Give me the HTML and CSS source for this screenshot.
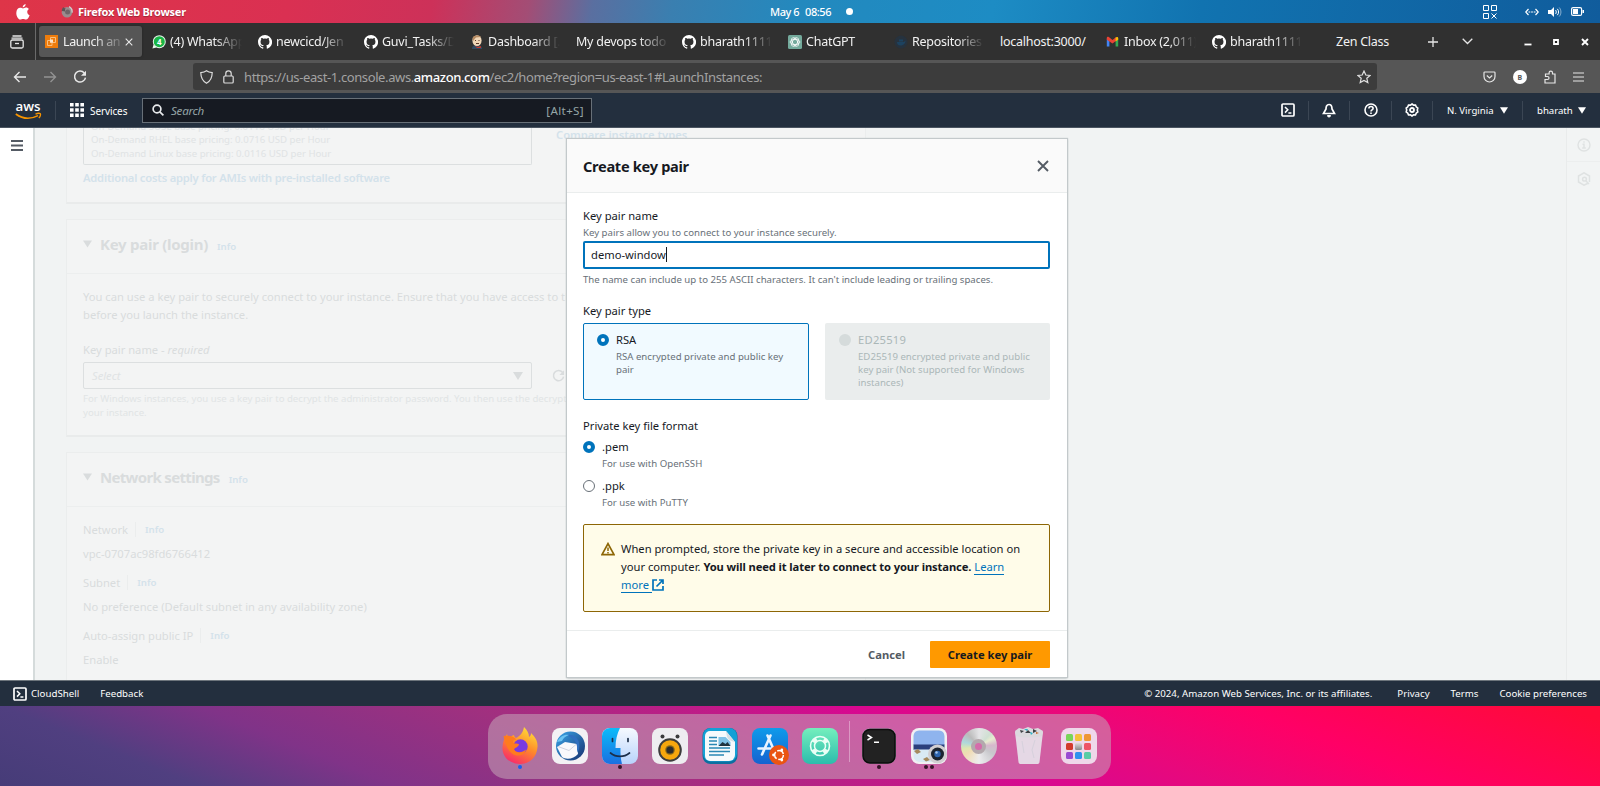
FILE: index.html
```html
<!DOCTYPE html>
<html lang="en">
<head>
<meta charset="utf-8">
<title>Launch an instance</title>
<link rel="stylesheet" href="styles.css">
</head>
<body>
<svg class="defs" width="0" height="0">
  <defs>
    <symbol id="github" viewBox="0 0 16 16"><path d="M8 0C3.58 0 0 3.58 0 8c0 3.54 2.29 6.53 5.47 7.59.4.07.55-.17.55-.38v-1.33c-2.23.48-2.7-1.07-2.7-1.07-.36-.93-.89-1.17-.89-1.17-.73-.5.05-.49.05-.49.8.06 1.23.83 1.23.83.72 1.22 1.87.87 2.33.66.07-.52.28-.87.5-1.07-1.77-.2-3.64-.89-3.64-3.95 0-.87.31-1.59.82-2.15-.08-.2-.36-1.02.08-2.12 0 0 .67-.21 2.2.82a7.7 7.7 0 0 1 4 0c1.53-1.04 2.2-.82 2.2-.82.44 1.1.16 1.92.08 2.12.51.56.82 1.27.82 2.15 0 3.07-1.87 3.75-3.65 3.95.29.25.54.73.54 1.48v2.19c0 .21.15.46.55.38A8 8 0 0 0 8 0z" fill="#fff"/></symbol>
    <symbol id="shell" viewBox="0 0 14 14"><rect x="1" y="1" width="12" height="12" rx="1" fill="none" stroke="#fff" stroke-width="1.7"/><path d="M4 4l2.8 2.8L4 9.6M7.4 10h3" fill="none" stroke="#fff" stroke-width="1.5"/></symbol>
    <symbol id="down" viewBox="0 0 10 8"><path d="M0 0h10L5 8z" fill="currentColor"/></symbol>
    <linearGradient id="g-blue" x1="0" y1="0" x2="0" y2="1"><stop offset="0" stop-color="#0bbcfa"/><stop offset="1" stop-color="#1b6fe0"/></linearGradient>
    <linearGradient id="g-pale" x1="0" y1="0" x2="0" y2="1"><stop offset="0" stop-color="#f6faff"/><stop offset="1" stop-color="#b8d3fb"/></linearGradient>
    <linearGradient id="g-store" x1="0" y1="0" x2="0" y2="1"><stop offset="0" stop-color="#0e9bea"/><stop offset="1" stop-color="#1562d0"/></linearGradient>
    <linearGradient id="g-mint" x1="0" y1="0" x2="0" y2="1"><stop offset="0" stop-color="#74efbd"/><stop offset="1" stop-color="#2cbcac"/></linearGradient>
    <linearGradient id="g-fox" x1=".8" y1="0" x2=".3" y2="1"><stop offset="0" stop-color="#ffe43a"/><stop offset=".5" stop-color="#ff8a2a"/><stop offset="1" stop-color="#f92a6a"/></linearGradient>
    <linearGradient id="g-bird" x1="0" y1="0" x2="1" y2="1"><stop offset="0" stop-color="#3aa6ea"/><stop offset="1" stop-color="#16306f"/></linearGradient>
  </defs>
</svg>

<div class="topbar">
  <svg class="apple" width="14" height="16" viewBox="0 0 14 16"><path d="M9.6 0c.2 1.6-1.200 3.400-2.900 3.400C6.500 1.800 8 .2 9.600 0zM7 4.400c.7 0 1.500-.9 3-.9 1.300 0 2.300.7 2.900 1.500-2.500 1.500-2 5.200.7 6.200C13 13.200 11.500 15.600 10 15.600c-1.200 0-1.500-.7-2.900-.7s-1.800.7-2.900.7C2.300 15.600.3 12.200.3 9c0-3.400 2-5.300 3.900-5.300 1.300 0 2.100.7 2.800.7z" fill="#fff"/></svg>
  <svg class="gfox" width="12" height="12" viewBox="0 0 12 12"><circle cx="6" cy="6.200" r="5.300" fill="#9a8c8e"/><path d="M0.800 5C.8 3 2 1.500 2.300 1c.5 1 1.200 1.300 2.400 1.400C3.500 4 3.800 5 5 5.500z" fill="#5d5356"/><circle cx="6.600" cy="6" r="2.500" fill="#6f6468"/><path d="M8 .6c2 1 3.500 3.400 3 6" stroke="#cfc9ca" fill="none" stroke-width="1.300"/></svg>
  <b class="appname">Firefox Web Browser</b>
  <div class="clock"><span>May 6</span><span>08:56</span><i></i></div>
  <div class="status">
    <svg width="14" height="14" viewBox="0 0 14 14" fill="none" stroke="#fff"><path d="M.5.500h5v5h-5zM8.500.500h5v5h-5zM.5 8.500h5v5h-5zM8.500 8.500l5 5m0-5l-5 5"/></svg>
    <svg class="net" width="14" height="8" viewBox="0 0 14 8" fill="none" stroke="#fff" stroke-width="1.200"><path d="M3.500 1L.8 4l2.700 3M10.500 1l2.700 3-2.700 3"/><path d="M3.500 4h7" stroke-dasharray="1.800 .8"/></svg>
    <svg class="vol" width="14" height="12" viewBox="0 0 14 12" fill="none" stroke="#fff"><path d="M0 4h3l3-3v10L3 8H0z" fill="#fff" stroke="none"/><path d="M7.500 4c1 1 1 3 0 4M9.300 2.800c1.700 1.700 1.700 4.700 0 6.400"/><path d="M11.200 1.500c2.300 2.500 2.300 6.500 0 9" opacity=".5"/></svg>
    <svg class="bat" width="13" height="9" viewBox="0 0 13 9"><rect x=".6" y=".6" width="10" height="7.800" rx="1.500" fill="none" stroke="#fff" stroke-width="1.200"/><rect x="2" y="2" width="5" height="5" fill="#fff"/><path d="M11.500 3h1.500v3h-1.500z" fill="#fff"/></svg>
  </div>
</div>

<div class="tabs">
  <div class="view"><svg width="14" height="14" viewBox="0 0 14 14" fill="none" stroke="#e6e6e6" stroke-width="1.300"><path d="M2.500 1h9M1.500 3.200h11"/><rect x=".8" y="5" width="12.400" height="8" rx="1.500"/><path d="M5 8.500h4"/></svg></div>
  <div class="tab on"><svg width="13" height="13" viewBox="0 0 13 13"><path d="M0 0h13v13H0z" fill="#ee7c0c"/><path d="M2.500 5.500h4.500v5H2.500zM5.500 2.500h5v5h-5z" fill="none" stroke="#f9c58b" stroke-width=".9"/><path d="M5 4.500h3v3H5z" fill="#fbe3c8"/></svg><span class="t short">Launch an</span><svg class="x" width="8" height="8" viewBox="0 0 8 8"><path d="M.7.700l6.600 6.600M7.300.700L.7 7.300" stroke="#e8e8e8" stroke-width="1.100"/></svg></div>
  <div class="tab"><svg width="14" height="14" viewBox="0 0 14 14"><circle cx="7.300" cy="6.700" r="6.500" fill="#e9f7ec"/><circle cx="7.300" cy="6.700" r="5.500" fill="#19b546"/><path d="M.4 13.600l1.200-4L4.500 12.500z" fill="#e9f7ec"/><text x="4.900" y="9.700" class="wa">4</text></svg><span class="t">(4) WhatsApp</span></div>
  <div class="tab"><svg width="14" height="14"><use href="#github"/></svg><span class="t">newcicd/Jen</span></div>
  <div class="tab"><svg width="14" height="14"><use href="#github"/></svg><span class="t">Guvi_Tasks/D</span></div>
  <div class="tab"><svg width="14" height="14" viewBox="0 0 14 14"><path d="M2 14c0-3 2-4 5-4s5 1 5 4z" fill="#304a62"/><ellipse cx="7" cy="5.600" rx="4.600" ry="5.400" fill="#f0d6b7"/><path d="M2.500 3C4 0 9 0 11 2L6 2.500 3 6z" fill="#b58a62"/><path d="M5 11l3 1 3-1v2H7z" fill="#c8372d"/><path d="M5 5.500h1M8.500 5.500h1M6 8.500h3" stroke="#5a3a2a"/></svg><span class="t">Dashboard [.</span></div>
  <div class="tab"><span class="t wide">My devops todo</span></div>
  <div class="tab"><svg width="14" height="14"><use href="#github"/></svg><span class="t">bharath1111</span></div>
  <div class="tab"><svg width="14" height="14" viewBox="0 0 14 14"><rect width="14" height="14" rx="1.500" fill="#74aa9c"/><g fill="none" stroke="#fff" stroke-width=".8"><ellipse cx="7" cy="7" rx="4.800" ry="2.500"/><ellipse cx="7" cy="7" rx="4.800" ry="2.500" transform="rotate(60 7 7)"/><ellipse cx="7" cy="7" rx="4.800" ry="2.500" transform="rotate(120 7 7)"/></g></svg><span class="t">ChatGPT</span></div>
  <div class="tab"><svg width="14" height="14" viewBox="0 0 14 14"><circle cx="7" cy="7" r="6.500" fill="#26323e"/><path d="M3 7h7l1.500-1.500C11.500 9 9 10.500 6.500 10.500S3 9 3 7z" fill="#1d425f"/><path d="M5 4.500h4v2H5z" fill="#1d425f"/></svg><span class="t">Repositories</span></div>
  <div class="tab"><span class="t wide clear">localhost:3000/</span></div>
  <div class="tab"><svg width="14" height="14" viewBox="0 0 14 14"><path d="M.8 3.500v8h2.600V6z" fill="#4285f4"/><path d="M12.200 3.500v8H9.600V6z" fill="#34a853"/><path d="M.8 4.800V3c0-1.200 1.200-1.500 2-.9L6.500 5l3.700-2.900v3.700L6.500 8.600z" fill="#ea4335"/><path d="M9.600 2.600c1.200-1.200 2.600-.6 2.600.6v1.500L9.600 6.400z" fill="#fbbc04"/></svg><span class="t">Inbox (2,011)</span></div>
  <div class="tab"><svg width="14" height="14"><use href="#github"/></svg><span class="t">bharath1111</span></div>
  <div class="tab"><span class="t pad">Zen Class</span></div>
  <div class="winbtns">
    <svg width="10" height="10" viewBox="0 0 10 10"><path d="M5 0v10M0 5h10" stroke="#e6e6e6" stroke-width="1.300"/></svg>
    <svg width="11" height="7" viewBox="0 0 11 7"><path d="M.7.700l4.800 4.800L10.300.700" fill="none" stroke="#e6e6e6" stroke-width="1.300"/></svg>
    <svg width="8" height="8" viewBox="0 0 8 8"><path d="M.5 6.500h7" stroke="#fff" stroke-width="1.800"/></svg>
    <svg width="6" height="6" viewBox="0 0 6 6"><path d="M1 1h4v4H1z" fill="#222" stroke="#fff" stroke-width="1.800"/></svg>
    <svg width="8" height="8" viewBox="0 0 8 8"><path d="M1 1l6 6M7 1L1 7" stroke="#fff" stroke-width="1.900"/></svg>
  </div>
</div>

<div class="nav">
  <svg class="n1" width="14" height="12" viewBox="0 0 14 12" fill="none" stroke="#e8e8e8" stroke-width="1.400"><path d="M13 6H1.500M6.500 1l-5 5 5 5"/></svg>
  <svg class="n2" width="14" height="12" viewBox="0 0 14 12" fill="none" stroke="#929292" stroke-width="1.400"><path d="M1 6h11.500M7.500 1l5 5-5 5"/></svg>
  <svg class="n3" width="14" height="14" viewBox="0 0 14 14"><path d="M11.300 3A5.500 5.500 0 1 0 12.500 7.600" fill="none" stroke="#e8e8e8" stroke-width="1.500"/><path d="M13 .8v5H8z" fill="#e8e8e8"/></svg>
  <div class="url">
    <svg width="13" height="14" viewBox="0 0 13 14" fill="none" stroke="#dcdcdc" stroke-width="1.200"><path d="M6.500.800C8 2 10 2.500 12.200 2.600c0 5-1.500 8.500-5.700 10.700C2.300 11 .8 7.600.8 2.600 3 2.500 5 2 6.500.800z"/></svg>
    <svg class="lock" width="11" height="14" viewBox="0 0 11 14" fill="none" stroke="#dcdcdc" stroke-width="1.200"><rect x=".8" y="6" width="9.400" height="7" rx="1"/><path d="M2.800 6V3.500a2.700 2.700 0 0 1 5.400 0V6"/></svg>
    <span class="addr">https://us-east-1.console.aws.<b>amazon.com</b>/ec2/home?region=us-east-1#LaunchInstances:</span>
    <svg class="star" width="14" height="14" viewBox="0 0 14 14" fill="none" stroke="#e0e0e0" stroke-width="1.200"><path d="M7 1l1.800 4 4.300.4-3.300 2.900 1 4.300L7 10.400l-3.800 2.200 1-4.300L.9 5.400 5.200 5z"/></svg>
  </div>
  <div class="ext">
    <svg width="13" height="12" viewBox="0 0 13 12" fill="none" stroke="#e6e6e6" stroke-width="1.200"><path d="M1.800 1h9.400c.5 0 .8.300.8.800V5.500a5.500 5.500 0 0 1-11 0V1.800c0-.5.3-.8.8-.8z"/><path d="M3.800 4.500l2.700 2.500 2.700-2.500"/></svg>
    <svg width="14" height="14" viewBox="0 0 14 14"><circle cx="7" cy="7" r="7" fill="#fff"/><text x="4.500" y="9.800" class="acct">B</text></svg>
    <svg width="12" height="14" viewBox="0 0 12 14" fill="none" stroke="#e6e6e6" stroke-width="1.200"><path d="M1 9.500V13h10V4H8.500V2.800a1.700 1.700 0 0 0-3.400 0V4H1.500v2.500h2a1.500 1.500 0 0 1 0 3z"/></svg>
    <svg width="11" height="10" viewBox="0 0 11 10" stroke="#e6e6e6" stroke-width="1.200"><path d="M0 1h11M0 5h11M0 9h11"/></svg>
  </div>
</div>

<div class="aws">
  <svg class="logo" width="27" height="19" viewBox="0 0 27 19"><text x="0.500" y="10" class="logotext" textLength="25" lengthAdjust="spacingAndGlyphs">aws</text><path d="M.8 13c7 5.200 15.500 5 22.200 1.600" fill="none" stroke="#f79400" stroke-width="1.600"/><path d="M20.500 13.100c2-.9 4.200-.9 4.900-.3.500.8-.3 3.200-1.600 4.300" fill="none" stroke="#f79400" stroke-width="1.300"/></svg>
  <i class="vr v1"></i>
  <svg class="grid9" width="14" height="14" viewBox="0 0 14 14"><path d="M0 0h3.600v3.600H0zM5.200 0h3.600v3.600H5.200zM10.400 0H14v3.600h-3.600zM0 5.200h3.600v3.600H0zM5.200 5.200h3.600v3.600H5.200zM10.400 5.200H14v3.600h-3.600zM0 10.400h3.600V14H0zM5.200 10.400h3.600V14H5.200zM10.400 10.400H14V14h-3.600z" fill="#fff"/></svg>
  <span class="services">Services</span>
  <div class="search">
    <svg width="12" height="12" viewBox="0 0 12 12" fill="none" stroke="#e8eaec" stroke-width="1.700"><circle cx="5" cy="5" r="3.900"/><path d="M7.800 7.800l3.600 3.600"/></svg>
    <em>Search</em><span>[Alt+S]</span>
  </div>
  <div class="tools">
    <div class="tool first"><svg width="14" height="14"><use href="#shell"/></svg></div>
    <div class="tool"><svg width="14" height="15" viewBox="0 0 14 15" fill="none" stroke="#fff" stroke-width="1.700"><path d="M7 1.500c-2.400 0-3 2-3 4.500L1.500 10.500h11L10 6c0-2.500-.6-4.500-3-4.500z"/><path d="M5.500 12.500a1.500 1.500 0 0 0 3 0z" fill="#fff" stroke-width="1"/></svg></div>
    <div class="tool"><svg width="14" height="14" viewBox="0 0 14 14" fill="none" stroke="#fff" stroke-width="1.600"><circle cx="7" cy="7" r="6"/><path d="M4.900 5.500c0-2.600 4.200-2.600 4.200 0C9.100 7 7 6.900 7 8.500M7 9.500v1.500"/></svg></div>
    <div class="tool"><svg width="14" height="14" viewBox="0 0 14 14" fill="none" stroke="#fff"><path d="M7 1l1.600 1.100 1.900-.1.700 1.800L12.800 5l-.5 2 .5 2-1.600 1.200-.7 1.800-1.900-.1L7 13l-1.600-1.100-1.900.1-.7-1.800L1.200 9l.5-2-.5-2 1.600-1.200.7-1.800 1.900.1z" stroke-width="1.600"/><circle cx="7" cy="7" r="2" stroke-width="1.800"/></svg></div>
    <div class="region">N. Virginia<svg width="8" height="7"><use href="#down"/></svg></div>
    <div class="user">bharath<svg width="8" height="7"><use href="#down"/></svg></div>
  </div>
</div>

<div class="main">
  <div class="rail"><svg width="12" height="11" viewBox="0 0 12 11" stroke="#545b64" stroke-width="1.800"><path d="M0 1h12M0 5.500h12M0 10h12"/></svg></div>
  <div class="content">
    <div class="card c1">
      <div class="types">
        <p>On-Demand SUSE base pricing: 0.0116 USD per Hour</p>
        <p>On-Demand RHEL base pricing: 0.0716 USD per Hour</p>
        <p>On-Demand Linux base pricing: 0.0116 USD per Hour</p>
      </div>
      <div class="compare">Compare instance types</div>
      <p class="addl">Additional costs apply for AMIs with pre-installed software</p>
    </div>
    <div class="card c2">
      <div class="head"><svg width="9" height="8"><use href="#down"/></svg><h2 class="h-key">Key pair (login)</h2><a>Info</a></div>
      <div class="body">
        <p class="para">You can use a key pair to securely connect to your instance. Ensure that you have access to the<br>before you launch the instance.</p>
        <p class="lbl">Key pair name - <em>required</em></p>
        <div class="selrow"><div class="select"><em>Select</em><svg width="10" height="8"><use href="#down"/></svg></div>
        <svg width="13" height="14" viewBox="0 0 14 14"><path d="M11.300 3A5.500 5.500 0 1 0 12.500 7.600" fill="none" stroke="#d9dcdd" stroke-width="1.700"/><path d="M13 .8v5H8z" fill="#d9dcdd"/></svg></div>
        <p class="hint">For Windows instances, you use a key pair to decrypt the administrator password. You then use the decrypted<br>your instance.</p>
      </div>
    </div>
    <div class="card c3">
      <div class="head"><svg width="9" height="8"><use href="#down"/></svg><h2 class="h-net">Network settings</h2><a>Info</a></div>
      <div class="body">
        <p class="kv">Network<i></i><a>Info</a></p>
        <p class="val">vpc-0707ac98fd6766412</p>
        <p class="kv">Subnet<i></i><a>Info</a></p>
        <p class="val pref">No preference (Default subnet in any availability zone)</p>
        <p class="kv auto">Auto-assign public IP<i></i><a>Info</a></p>
        <p class="val">Enable</p>
      </div>
    </div>
  </div>
  <div class="helprail">
    <div><svg width="14" height="14" viewBox="0 0 14 14" fill="none" stroke="#dfe2e2" stroke-width="1.400"><circle cx="7" cy="7" r="6"/><path d="M5.500 6.200H7V10M5.200 10h3.600M7 3.300v1.400"/></svg></div>
    <div><svg width="14" height="14" viewBox="0 0 14 14" fill="none" stroke="#dfe2e2" stroke-width="1.500"><path d="M11 11.300L7 13.200 1.500 10V4L7 .8 12.500 4v6M9 9l3 3"/><circle cx="7.500" cy="7.200" r="1.900"/></svg></div>
  </div>

  <div class="modal">
    <div class="mhead"><h1>Create key pair</h1><svg width="12" height="12" viewBox="0 0 12 12"><path d="M1 1l10 10M11 1L1 11" stroke="#545b64" stroke-width="1.900"/></svg></div>
    <div class="mbody">
      <div class="label">Key pair name</div>
      <div class="small s1">Key pairs allow you to connect to your instance securely.</div>
      <div class="input"><span>demo-window</span><i></i></div>
      <div class="small s2">The name can include up to 255 ASCII characters. It can't include leading or trailing spaces.</div>
      <div class="label type">Key pair type</div>
      <div class="tiles">
        <div class="tile sel"><i class="radio on"></i><div><div class="name">RSA</div><div class="small">RSA encrypted private and public key<br>pair</div></div></div>
        <div class="tile off"><i class="radio dis"></i><div><div class="name ed">ED25519</div><div class="small">ED25519 encrypted private and public<br>key pair (Not supported for Windows<br>instances)</div></div></div>
      </div>
      <div class="label fmt">Private key file format</div>
      <div class="opt"><i class="radio on"></i><div><div class="name">.pem</div><div class="small">For use with OpenSSH</div></div></div>
      <div class="opt"><i class="radio"></i><div><div class="name">.ppk</div><div class="small">For use with PuTTY</div></div></div>
      <div class="alert">
        <svg width="14" height="14" viewBox="0 0 14 14"><path d="M7 1.600L13 12.700H1z" fill="none" stroke="#8d6605" stroke-width="1.700"/><path d="M7 5.500v3.500M7 10v1.500" stroke="#8d6605" stroke-width="1.500"/></svg>
        <div>When prompted, store the private key in a secure and accessible location on<br>your computer. <b>You will need it later to connect to your instance.</b> <a>Learn</a><br><a>more&nbsp;</a><svg class="extl" width="12" height="12" viewBox="0 0 12 12" fill="none" stroke="#0073bb" stroke-width="1.700"><path d="M5 1H1v10h10V7M7 1h4v4M11 1L4.500 7.500"/></svg></div>
      </div>
    </div>
    <div class="mfoot"><b class="cancel">Cancel</b><b class="create">Create key pair</b></div>
  </div>
</div>

<div class="footer">
  <svg width="14" height="14"><use href="#shell"/></svg><span class="f1">CloudShell</span><span class="f2">Feedback</span>
  <span class="f3">© 2024, Amazon Web Services, Inc. or its affiliates.</span><span class="f4">Privacy</span><span class="f5">Terms</span><span class="f6">Cookie preferences</span>
</div>

<div class="desk">
  <div class="dock">
    <div class="app"><svg viewBox="0 0 36 36"><path d="M18 36C8 36 0 29 .5 19 .8 13 3 9 5 6c.5 2 1 3 2 4 1.500-1.500 3-2.500 5-3 0 1 1 2.500 2 3 4-2 7-5 8-11 3 3 5 6 5 10 2-1 2-3 2-4 4 4 7 8 6.500 14C34.800 29 28 36 18 36z" fill="url(#g-fox)"/><circle cx="18.500" cy="18.500" r="7.200" fill="#7a3be0"/><path d="M1.500 8c5-1 10 0 13 3.500-3 0-4 1.500-3.500 3.500 2 1 5 0 6 1.500-1 3-4 3-5 5 2 4 9 3 12 0-1 6-9 8-14 4S3 15 1.500 8z" fill="#ff7b1e"/></svg><i class="blue"></i></div>
    <div class="app"><svg viewBox="0 0 36 36"><rect width="36" height="36" rx="8" fill="#f3f1f4"/><circle cx="18.500" cy="18" r="14.500" fill="url(#g-bird)"/><path d="M5 19l8-5 12 2 1 10c-4 5-12 6-16 3z" fill="#f8f8fc"/><path d="M6 18.500l11 4 7-6" fill="none" stroke="#cfd3e0"/><path d="M14 7c9-2 15 5 13 14-2 5-1 3-2 1 1-7-3-12-11-15z" fill="#2f6fc0"/><path d="M5 14c3-6 8-8 12-7-3 1-6 3-7 6z" fill="#6cc3f2"/></svg></div>
    <div class="app"><svg viewBox="0 0 36 36"><rect width="36" height="36" rx="8" fill="url(#g-pale)"/><path d="M8 0h10c-3 6-4.500 12-4.500 20h5c-.2 6 .2 11 1.500 16H8a8 8 0 0 1-8-8V8a8 8 0 0 1 8-8z" fill="url(#g-blue)"/><path d="M10.500 10.500v3M26 10.500v3M8.500 25c5.500 4.500 13.500 4.500 19 0" fill="none" stroke="#1c2e48" stroke-width="1.700" stroke-linecap="round"/></svg><i></i></div>
    <div class="app"><svg viewBox="0 0 36 36"><rect width="36" height="36" rx="8" fill="#eeedf0"/><circle cx="10.500" cy="8.500" r="2" fill="#3a3a3c"/><circle cx="25.500" cy="8.500" r="2" fill="#3a3a3c"/><circle cx="18" cy="22" r="11.800" fill="#3c3c3c"/><circle cx="18" cy="22" r="9.800" fill="#f6a70d"/><circle cx="18" cy="22" r="4.800" fill="#8a6a1a"/><circle cx="18" cy="22" r="3.600" fill="#2c2c2c"/></svg></div>
    <div class="app"><svg viewBox="0 0 36 36"><rect x=".5" width="35" height="36" rx="8" fill="#0c6f9f"/><rect x="1" width="34" height="33.500" rx="8" fill="#13a0d6"/><path d="M8 3h16l9 11v13a6 6 0 0 1-6 6H8a5 5 0 0 1-5-5V8a5 5 0 0 1 5-5z" fill="#f6fafc"/><path d="M24 3c1 5 0 9 9 11z" fill="#d6dfe4"/><path d="M7 9.500h8M7 13h8M7 16.500h8M7 20h21M7 23.500h21M7 27h15" stroke="#2a88b4" stroke-width="1.400"/><path d="M16.500 9h7l5 5v4h-12z" fill="#7fc2e6"/><path d="M16.500 18l4-4 3 2 2-2 3 4z" fill="#1f3440"/></svg></div>
    <div class="app"><svg viewBox="0 0 36 36"><rect width="36" height="36" rx="8" fill="url(#g-store)"/><path d="M18.500 7.500l-8.500 19M15.500 7.500l7 16M6.500 20.500h12" fill="none" stroke="#e8f3ff" stroke-width="2.600" stroke-linecap="round"/><circle cx="27" cy="27" r="10" fill="#ea5412"/><circle cx="27" cy="27" r="4.400" fill="none" stroke="#fff" stroke-width="1.500" stroke-dasharray="7.500 1.700"/><circle cx="21.500" cy="27" r="1.400" fill="#fff"/><circle cx="29.800" cy="22" r="1.400" fill="#fff"/><circle cx="29.800" cy="32" r="1.400" fill="#fff"/></svg></div>
    <div class="app"><svg viewBox="0 0 36 36"><rect width="36" height="36" rx="8" fill="url(#g-mint)"/><circle cx="18" cy="18" r="9.500" fill="none" stroke="#eafff6" stroke-width="1.600"/><circle cx="18" cy="18" r="5.500" fill="none" stroke="#eafff6" stroke-width="1.500"/><circle cx="18" cy="18" r="7.500" fill="none" stroke="#eafff6" stroke-width="3.500" stroke-dasharray="4.500 7.280" stroke-dashoffset="-3.640" transform="rotate(0 18 18)"/></svg></div>
    <u class="sep"></u>
    <div class="app"><svg viewBox="0 0 36 36"><rect x="1" y=".5" width="34" height="35" rx="8" fill="#9aa6ab"/><rect x="2" y="1.500" width="32" height="33.500" rx="7" fill="#222" stroke="#0c0c0c" stroke-width="1.500"/><path d="M6.500 7l4 2.500-4 2.500M13 14.200h5" fill="none" stroke="#fff" stroke-width="1.500"/></svg><i></i></div>
    <div class="app"><svg viewBox="0 0 36 36"><rect width="36" height="36" rx="8" fill="#f2f0f3"/><path d="M2.500 8A6 6 0 0 1 8 2.500h20A6 6 0 0 1 33.500 8v9h-31z" fill="#8fb4ee"/><path d="M2.500 16.500h31V22h-31z" fill="#2b3f7c"/><path d="M2.500 21.500h31v6.500a6 6 0 0 1-6 6H8a6 6 0 0 1-5.500-6z" fill="#d9eaf4"/><path d="M3 23l4-2 3 3-4 2zM12 31l4-2 3 3-4 1.500z" fill="#a58a5e"/><circle cx="26.500" cy="26" r="9.500" fill="#d2cfd2"/><circle cx="26.500" cy="26" r="6.500" fill="#1c2430"/><circle cx="26.500" cy="26" r="3.200" fill="#2d64ae"/><circle cx="25.500" cy="24.500" r="1.200" fill="#a9c8ee"/></svg><i></i><i></i></div>
    <div class="app"><div class="disc"><div></div></div></div>
    <div class="app"><svg viewBox="0 0 36 36"><path d="M4 4h28l-3.500 30c-.2 1.500-1 2-2.500 2H10c-1.500 0-2.300-.5-2.500-2z" fill="#e6e2ea" opacity=".93"/><path d="M4 3l4-3 4 1 5-2 5 2 5-1 5 3-1 5c-7 2-19 2-26 0z" fill="#dcd9de"/><path d="M9 2l4 1-3 2zM14 5l3-3 3 3zM22 1l4 2-4 2z" fill="#3d4043"/><path d="M13 1h4l-1 2zM19 4l3 1-2 2z" fill="#2fb5c8"/><path d="M25 4l3 1-3 1z" fill="#c96a2a"/><path d="M11 13l2 12M24 12l-3 10 2 8" stroke="#d6d1dc" fill="none"/></svg></div>
    <div class="app"><div class="pad9"><b></b><b></b><b></b><b></b><b></b><b></b><b></b><b></b><b></b></div></div>
  </div>
</div>
</body>
</html>
```
FILE: styles.css
```css
* { box-sizing: border-box; }
body { margin: 0; width: 1600px; height: 786px; overflow: hidden; display: flex; flex-direction: column; font-family: "Noto Sans", "Open Sans", sans-serif; }
p, h1, h2 { margin: 0; }
svg { flex: none; display: block; }
.defs { position: absolute; }

/* desktop top bar */
.topbar { height: 23px; flex: none; display: grid; grid-template-columns: 770px 1fr auto; align-items: center; background: linear-gradient(100deg, #de3548 0, #da3052 18%, #cd3159 27%, #a34d75 33%, #5a6fa0 37%, #3a7fb0 42%, #2389be 50%, #1d8cc4 62%, #1173b0 75%, #105c9c 100%); color: #fff; font-size: 11px; grid-template-areas: "left mid right"; }
.topbar .apple { grid-area: left; margin-left: 16px; }
.topbar .gfox { grid-area: left; margin-left: 61px; }
.appname { grid-area: left; margin-left: 78px; font-size: 11px; letter-spacing: -.25px; text-shadow: 0 1px 1px rgba(0,0,0,.3); }
.clock { grid-area: mid; display: flex; align-items: center; gap: 6px; font-size: 11px; letter-spacing: -.45px; white-space: nowrap; font-weight: 500; }
.clock i { width: 7px; height: 7px; border-radius: 50%; background: #fff; margin-left: 9px; }
.status { grid-area: right; display: flex; align-items: center; padding-right: 16px; }
.status .net { margin-left: 28px; }
.status .vol { margin-left: 9px; }
.status .bat { margin-left: 9px; }

/* browser tabs */
.tabs { height: 37px; flex: none; display: flex; align-items: center; background: #303030; }
.view { width: 36px; height: 37px; border-right: 1px solid #6a6a6a; display: flex; align-items: center; padding-left: 10px; margin-right: 2px; }
.tab { width: 106px; height: 31px; flex: none; display: flex; align-items: center; padding-left: 8px; color: #f2f2f2; font-size: 12.500px; letter-spacing: -.25px; }
.tab .t { width: 74px; margin-left: 4px; white-space: nowrap; -webkit-mask-image: linear-gradient(90deg, #000 45px, transparent 72px); mask-image: linear-gradient(90deg, #000 45px, transparent 72px); }
.tab .wide { width: 92px; margin-left: 0; -webkit-mask-image: linear-gradient(90deg, #000 62px, transparent 94px); mask-image: linear-gradient(90deg, #000 62px, transparent 94px); }
.tab .clear, .tab .pad { -webkit-mask-image: none; mask-image: none; }
.tab .pad { margin-left: 18px; }
.tab.on { width: 103px; margin: 0 2px 0 1px; padding-left: 6px; background: #565656; border-radius: 3px; box-shadow: 0 0 2px #222; }
.tab.on .short { width: 58px; margin-left: 5px; letter-spacing: -.4px; -webkit-mask-image: linear-gradient(90deg, #000 30px, transparent 64px); mask-image: linear-gradient(90deg, #000 30px, transparent 64px); }
.tab.on .x { margin-left: 4px; }
.wa { font: bold 8px "Noto Sans", sans-serif; fill: #fff; }
.winbtns { display: flex; align-items: center; margin-left: auto; padding-right: 11px; }
.winbtns svg:nth-child(2) { margin-left: 24px; }
.winbtns svg:nth-child(3) { margin-left: 51px; }
.winbtns svg:nth-child(4) { margin-left: 21px; }
.winbtns svg:nth-child(5) { margin-left: 22px; }

/* address bar */
.nav { height: 33px; flex: none; display: flex; align-items: center; background: #565656; }
.n1 { margin-left: 13px; }
.n2 { margin-left: 16px; }
.n3 { margin-left: 16px; }
.url { width: 1184px; height: 27px; margin-left: 106px; padding-left: 7px; display: flex; align-items: center; background: #3c3c3c; border-radius: 3px; }
.lock { margin-left: 10px; }
.addr { margin-left: 10px; font-size: 13px; color: #a2a2a2; letter-spacing: -.39px; white-space: nowrap; }
.addr b { font-weight: 500; color: #fff; }
.star { margin-left: auto; margin-right: 6px; }
.ext { display: flex; align-items: center; margin-left: 106px; gap: 17px; }
.acct { font: bold 7px "Noto Sans", sans-serif; fill: #555; }

/* console header */
.aws { height: 35px; flex: none; display: flex; align-items: center; background: #232f3e; color: #fff; border-bottom: 1px solid #4b5561; }
.logo { margin-left: 15px; }
.logotext { font: 600 13px "Open Sans", sans-serif; fill: #fff; }
.vr { width: 1px; height: 19px; background: #3b4654; }
.v1 { margin-left: 13px; }
.grid9 { margin-left: 14px; }
.services { margin-left: 6px; width: 52px; padding-top: 2px; font-size: 10px; letter-spacing: -.1px; }
.search { width: 450px; height: 25px; border: 1px solid #687078; background: #161a22; display: flex; align-items: center; padding: 0 7px 0 9px; color: #95a5a6; font-size: 11.600px; }
.search em { margin-left: 7px; letter-spacing: -.25px; }
.search span { margin-left: auto; letter-spacing: .35px; }
.tools { margin-left: auto; display: flex; align-items: center; font-size: 9.600px; }
.tool { width: 41.300px; height: 19px; display: flex; align-items: center; justify-content: center; border-right: 1px solid #3b4654; }
.region, .user { display: flex; align-items: center; height: 19px; white-space: nowrap; padding-top: 1px; }
.region { width: 90px; padding-left: 14px; gap: 6px; border-right: 1px solid #3b4654; }
.user { width: 77px; padding-left: 14px; gap: 5px; }

/* dimmed page behind the dialog */
.main { height: 552px; flex: none; display: flex; position: relative; background: #f1f3f3; overflow: hidden; }
.rail { width: 35px; height: 100%; flex: none; background: #fff; border-right: 2px solid #d5dbdb; padding: 12px 0 0 11px; }
.content { flex: 1; padding-left: 31px; color: #d9dcdd; font-size: 11.200px; }
.card { width: 800px; background: #f3f4f4; border: 1px solid #ebeded; border-bottom: 2px solid #e9ebeb; padding-left: 16px; white-space: nowrap; }
.card a, .addl, .compare { color: #d3e2eb; }
.c1 { height: 76px; border-top: 0; display: grid; grid-template: 37px 1fr / 449px 1fr; column-gap: 24px; }
.types { border: 1px solid #dcdfe0; border-top: 0; border-radius: 0 0 2px 2px; font-size: 9.650px; line-height: 13.300px; padding: 0 7px 4px; display: flex; flex-direction: column; justify-content: flex-end; overflow: hidden; color: #e0e3e4; }
.compare { line-height: 13px; font-weight: 600; }
.addl { padding-top: 5px; font-weight: 600; letter-spacing: -.2px; }
.c2 { margin-top: 15px; height: 218px; }
.c3 { margin-top: 15px; height: 300px; }
.head { height: 54px; margin-left: -16px; padding: 0 0 5px 16px; border-bottom: 1px solid #eceeee; display: flex; align-items: center; }
.head h2 { font-size: 15px; margin-left: 8px; font-weight: 700; }
.h-key { letter-spacing: -.27px; }
.h-net { letter-spacing: -.68px; }
.head a { font-size: 9.650px; font-weight: 600; margin-left: 9px; padding-top: 5px; }
.para { padding-top: 14px; line-height: 18.200px; }
.lbl { padding-top: 17px; line-height: 18px; }
.selrow { display: flex; align-items: center; gap: 20px; margin-top: 3px; }
.select { width: 449px; height: 27px; border: 1px solid #dcdfe0; border-radius: 2px; display: flex; align-items: center; justify-content: space-between; padding: 0 8px; color: #e0e3e4; }
.select svg { color: #d9dcdd; }
.hint { font-size: 9.650px; line-height: 13.300px; margin-top: 3px; color: #e1e4e5; }
.kv { display: flex; align-items: center; height: 18px; margin-top: 9px; }
.kv a { font-size: 9.650px; font-weight: 600; margin-left: 9px; }
.kv i { width: 1px; height: 15px; background: #ebeded; margin-left: 7px; }
.val { height: 18px; line-height: 18px; margin-top: 7px; }
.c3 .body { padding-top: 4px; }
.val + .kv { margin-top: 10px; }
.helprail { width: 34px; border-left: 1px solid #e9ebeb; background: #f2f4f4; }
.helprail div { height: 34px; display: flex; align-items: center; justify-content: center; border-bottom: 1px solid #eceeee; }
.helprail div + div { border: 0; }

/* dialog */
.modal { position: absolute; left: 567px; top: 11px; width: 500px; height: 538px; background: #fff; box-shadow: 0 0 1px 1px #c3c9cb, 0 1px 2px #9aa2a5; color: #16191f; font-size: 11.200px; white-space: nowrap; }
.mhead { height: 54px; background: #fafafa; border-bottom: 1px solid #eaeded; display: flex; align-items: center; justify-content: space-between; padding: 0 18px 0 16px; }
h1 { font-size: 14.600px; font-weight: 700; letter-spacing: -.3px; }
.mbody { padding: 14px 17px 0 16px; height: 437px; }
.label { height: 18px; line-height: 18px; }
.small { font-size: 9.650px; line-height: 13.300px; color: #687078; }
.s1 { margin-top: 1px; }
.input { height: 28px; margin-top: 2px; border: 2px solid #0073bb; border-radius: 2px; display: flex; align-items: center; padding: 0 0 2px 6px; }
.input i { width: 1px; height: 15px; background: #16191f; }
.s2 { margin-top: 4px; }
.type { margin-top: 15px; }
.tiles { display: flex; gap: 16px; margin-top: 3px; }
.tile { flex: 1; height: 77px; border-radius: 2px; padding: 8px 0 0 14px; display: flex; }
.tile > div, .opt > div { margin-left: 7px; }
.sel { background: #f1faff; border: 1px solid #0073bb; padding: 7px 0 0 13px; }
.off, .off .small { color: #aab7b8; }
.off { background: #eaeded; }
.radio { width: 12px; height: 12px; border-radius: 50%; border: 1px solid #687078; background: #fff; margin-top: 3px; flex: none; }
.radio.on { border: 4px solid #0073bb; }
.radio.dis { border: 0; background: #d5dbdb; }
.name { height: 18px; line-height: 18px; }
.ed { letter-spacing: .25px; }
.name + .small { padding-top: 1px; }
.fmt { margin-top: 17px; }
.opt { display: flex; height: 34px; margin-top: 3px; }
.opt + .opt { margin-top: 5px; }
.alert { height: 88px; margin-top: 13px; border: 1px solid #8d6605; border-radius: 2px; background: #fffce9; display: flex; padding: 15px 0 0 17px; line-height: 18.200px; }
.alert > svg { margin-top: 2px; }
.alert > div { margin-left: 6px; }
.alert b { letter-spacing: -.11px; }
.alert a { color: #0073bb; border-bottom: 1px solid #0073bb; }
.extl { display: inline-block; vertical-align: -2px; }
.mfoot { height: 47px; border-top: 1px solid #eaeded; display: flex; align-items: center; justify-content: flex-end; padding-right: 17px; }
.cancel { color: #545b64; margin-right: 25px; }
.create { width: 120px; height: 27px; line-height: 27px; text-align: center; background: #ff9900; border-radius: 1px; }

/* console footer */
.footer { height: 26px; flex: none; background: #232f3e; border-top: 1px solid #6d757c; display: flex; align-items: center; padding: 0 13px; color: #fff; font-size: 9.700px; white-space: nowrap; }
.f1 { margin-left: 4px; }
.f2 { margin-left: 21px; }
.f3 { margin-left: auto; }
.f4 { margin-left: 25px; }
.f5, .f6 { margin-left: 21px; }

/* desktop and dock */
.desk { height: 80px; flex: none; display: flex; justify-content: center; padding: 8px 2px 0 0; background: linear-gradient(22deg, #463c78 0, #503f80 11%, #803388 22%, #a0307f 37%, #c01a88 50%, #d80890 58%, #e8087c 68%, #ff0066 80%, #ff0a38 98%); }
.dock { width: 623px; height: 65px; border-radius: 19px; background: rgba(196,166,184,.55); display: flex; padding: 14px 0 0 14px; gap: 14px; }
.app { width: 36px; display: flex; flex-wrap: wrap; justify-content: center; align-content: flex-start; column-gap: 2px; }
.app > svg, .disc, .pad9 { width: 36px; height: 36px; overflow: visible; }
.app i { width: 4px; height: 4px; border-radius: 50%; background: #361428; margin-top: 1px; }
.app i.blue { background: #1560f0; }
.sep { width: 1px; height: 41px; background: rgba(255,255,255,.35); margin: -7px -3px 0 -3px; }
.disc { border-radius: 50%; background: conic-gradient(#e4e4e6, #cfe0d2 12%, #e8ecd0 17%, #d6b8cc 24%, #c8c8cc 33%, #ececee 50%, #f0dcb4 66%, #dfe6b0 72%, #aed8dc 79%, #bbb 88%, #e4e4e6); display: flex; align-items: center; justify-content: center; }
.disc div { width: 15px; height: 15px; border-radius: 50%; border: 4px solid #b3a9ad; background: #d56cab; }
.pad9 { background: #efd8ea; border-radius: 8px; display: grid; grid-template-columns: repeat(3, 7px); grid-auto-rows: 7px; gap: 2px; place-content: center; }
.pad9 b { border-radius: 1.500px; background: #78d558; }
.pad9 b:nth-child(2) { background: #f3c13a; }
.pad9 b:nth-child(3) { background: #ee9636; }
.pad9 b:nth-child(4) { background: #d23a2c; }
.pad9 b:nth-child(5) { background: linear-gradient(#ddd, #888); }
.pad9 b:nth-child(6) { background: #ee5366; }
.pad9 b:nth-child(7) { background: #9a4cd2; }
.pad9 b:nth-child(8) { background: #2f93ee; }
.pad9 b:nth-child(9) { background: #58cda6; }
```
